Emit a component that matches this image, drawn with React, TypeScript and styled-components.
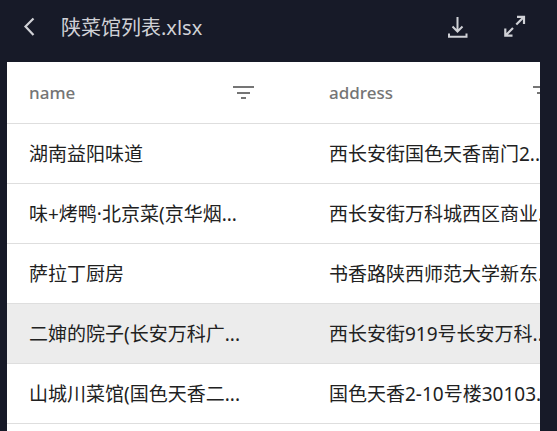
import React from "react";
import styled, { createGlobalStyle } from "styled-components";

const GlobalStyle = createGlobalStyle`
  *, *::before, *::after { box-sizing: border-box; }
  body {
    margin: 0;
    background: #171a28;
    font-family: "Noto Sans", "Noto Sans CJK SC", sans-serif;
  }
`;

const Page = styled.main`
  display: flex;
  flex-direction: column;
  height: 100vh;
  overflow: hidden;
  padding: 0 17px 0 7px;
  background: #171a28;
`;

const Toolbar = styled.header`
  display: flex;
  flex: none;
  align-items: center;
  height: 62px;
  padding: 0 12px 8px 8px;
  color: #d0d1d6;
`;

const Title = styled.h1`
  flex: 1;
  min-width: 0;
  margin: 0 0 0 18px;
  padding-top: 2px;
  overflow: hidden;
  font-size: 20px;
  font-weight: 400;
  line-height: 30px;
  white-space: nowrap;
`;

const IconButton = styled.button`
  display: inline-flex;
  flex: none;
  align-items: center;
  justify-content: center;
  width: 28px;
  height: 28px;
  padding: 0;
  border: 0;
  background: transparent;
  color: inherit;
  cursor: pointer;
`;

const Actions = styled.div`
  display: flex;
  gap: 29px;
`;

const Sheet = styled.section`
  flex: 1;
  min-height: 0;
  overflow: hidden;
  background: #fff;
`;

const Table = styled.table`
  width: 600px;
  border-collapse: separate;
  border-spacing: 0;
  table-layout: fixed;
`;

const HeadCell = styled.th`
  height: 62px;
  padding: 0 50px 0 22px;
  border-bottom: 1px solid #dedede;
  color: #757575;
  font-size: 17px;
  font-weight: 500;
  line-height: 24px;
  text-align: left;
`;

const HeadContent = styled.div`
  display: flex;
  align-items: center;
  justify-content: space-between;
`;

const Row = styled.tr<{ $active?: boolean }>`
  background: ${(p) => (p.$active ? "#ececec" : "#fff")};
`;

const Cell = styled.td`
  height: 60px;
  padding: 0 0 0 22px;
  border-bottom: 1px solid #dedede;
  color: #212121;
  font-size: 19px;
  line-height: 28px;
  white-space: nowrap;
`;

const BackIcon = () => (
  <svg width="28" height="28" viewBox="0 0 28 28" fill="none" stroke="currentColor" strokeWidth="2.200" aria-hidden="true">
    <path d="M18.500 5.500 10.500 13.500l8 8.500" />
  </svg>
);

const DownloadIcon = () => (
  <svg width="28" height="28" viewBox="0 0 28 28" fill="none" stroke="currentColor" strokeWidth="2" aria-hidden="true">
    <path d="M14.500 4v14M9.500 13.500l5 5 5-5M6 20.500V23.700h17.500v-3.200" />
  </svg>
);

const ExpandIcon = () => (
  <svg width="28" height="28" viewBox="0 0 28 28" fill="none" stroke="currentColor" strokeWidth="2.200" aria-hidden="true">
    <path d="M16.300 11.500 23.300 4.500M17 3.800H24V11M13 15 6 22M5.300 15.500V22.700H12.500" />
  </svg>
);

const FilterIcon = () => (
  <svg width="28" height="28" viewBox="0 0 28 28" fill="none" stroke="currentColor" strokeWidth="2" aria-hidden="true">
    <path d="M4 8h21M8 14h13M12 19h5" />
  </svg>
);

const columns = ["name", "address"];

const rows = [
  { name: "湖南益阳味道", address: "西长安街国色天香南门2..." },
  { name: "味+烤鸭·北京菜(京华烟...", address: "西长安街万科城西区商业..." },
  { name: "萨拉丁厨房", address: "书香路陕西师范大学新东..." },
  { name: "二婶的院子(长安万科广...", address: "西长安街919号长安万科...", active: true },
  { name: "山城川菜馆(国色天香二...", address: "国色天香2-10号楼30103..." },
];

export default function App() {
  return (
    <>
      <GlobalStyle />
      <Page>
        <Toolbar>
          <IconButton type="button" aria-label="返回">
            <BackIcon />
          </IconButton>
          <Title>陕菜馆列表.xlsx</Title>
          <Actions>
            <IconButton type="button" aria-label="下载">
              <DownloadIcon />
            </IconButton>
            <IconButton type="button" aria-label="全屏">
              <ExpandIcon />
            </IconButton>
          </Actions>
        </Toolbar>
        <Sheet>
          <Table>
            <thead>
              <tr>
                {columns.map((column) => (
                  <HeadCell key={column} scope="col">
                    <HeadContent>
                      {column}
                      <IconButton type="button" aria-label={`筛选 ${column}`}>
                        <FilterIcon />
                      </IconButton>
                    </HeadContent>
                  </HeadCell>
                ))}
              </tr>
            </thead>
            <tbody>
              {rows.map((row) => (
                <Row key={row.name} $active={row.active}>
                  <Cell>{row.name}</Cell>
                  <Cell>{row.address}</Cell>
                </Row>
              ))}
            </tbody>
          </Table>
        </Sheet>
      </Page>
    </>
  );
}
